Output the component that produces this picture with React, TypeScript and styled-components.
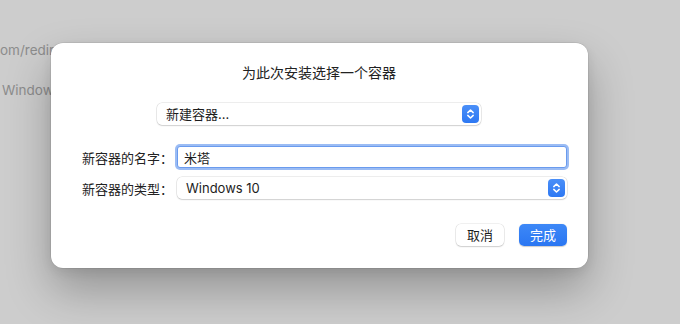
import { FC } from "react";
import styled, { createGlobalStyle } from "styled-components";

const FONT = `"Inter", "Noto Sans CJK SC", "Noto Sans", sans-serif`;

const GlobalStyle = createGlobalStyle`
	html, body {
		margin: 0;
		padding: 0;
		background: #cdcdcd;
		font-family: ${FONT};
		-webkit-font-smoothing: antialiased;
	}
`;

const Chevrons: FC = () => (
	<svg width='9' height='12' viewBox='0 0 9 12' fill='none'>
		<path d='M1.8 4.6 L4.5 2 L7.2 4.6' stroke='white' strokeWidth='1.5' strokeLinecap='round' strokeLinejoin='round' />
		<path d='M1.8 7.4 L4.5 10 L7.2 7.4' stroke='white' strokeWidth='1.5' strokeLinecap='round' strokeLinejoin='round' />
	</svg>
);

const PopUp: FC<{ label: string; width?: number }> = ({ label, width }) => (
	<Select $width={width}>
		<span>{label}</span>
		<Stepper>
			<Chevrons />
		</Stepper>
	</Select>
);

export default function App() {
	return (
		<>
			<GlobalStyle />
			<Page>
				<Behind>
					<BehindLine $top={42} $left={0}>om/redirect</BehindLine>
					<BehindLine $top={24} $left={2}>Windows</BehindLine>
				</Behind>

				<Dialog>
					<Title>为此次安装选择一个容器</Title>
					<Centered>
						<PopUp label='新建容器...' width={324} />
					</Centered>

					<Form>
						<Label>新容器的名字：</Label>
						<NameInput defaultValue='米塔' />
						<Label>新容器的类型：</Label>
						<PopUp label='Windows 10' />
					</Form>

					<Actions>
						<Button>取消</Button>
						<Button $primary>完成</Button>
					</Actions>
				</Dialog>
			</Page>
		</>
	);
}

const Page = styled.div`
	position: relative;
	width: 680px;
	height: 324px;
	overflow: hidden;
	background: #cdcdcd;
`;

const Behind = styled.div`
	display: flex;
	flex-direction: column;
	color: #8c8c8c;
	font-size: 13.5px;
	line-height: 16px;
`;

const BehindLine = styled.div<{ $top: number; $left: number }>`
	margin-top: ${(p) => p.$top}px;
	padding-left: ${(p) => p.$left}px;
	white-space: nowrap;
`;

const Dialog = styled.div`
	position: absolute;
	left: 51px;
	top: 43px;
	width: 537px;
	height: 225px;
	box-sizing: border-box;
	padding: 22px 21px 0 29px;
	background: #fff;
	border-radius: 12px;
	box-shadow: 0 0 0 0.5px rgba(0, 0, 0, 0.12), 0 22px 45px rgba(0, 0, 0, 0.28), 0 4px 12px rgba(0, 0, 0, 0.08);
	font-size: 13px;
	color: #222;
`;

const Title = styled.div`
	text-align: center;
	font-size: 14px;
	line-height: 16px;
	padding-right: 9px;
`;

const Centered = styled.div`
	display: flex;
	justify-content: center;
	margin-top: 22px;
	padding-right: 9px;
`;

const Select = styled.div<{ $width?: number }>`
	display: flex;
	align-items: center;
	justify-content: space-between;
	box-sizing: border-box;
	width: ${(p) => (p.$width ? `${p.$width}px` : "100%")};
	height: 22px;
	padding: 0 2px 0 9px;
	background: #fff;
	border-radius: 5px;
	box-shadow: 0 0 0 0.5px rgba(0, 0, 0, 0.14), 0 1px 1.5px rgba(0, 0, 0, 0.12);
	line-height: 16px;
	color: #1d1d1d;
`;

const Stepper = styled.span`
	display: flex;
	align-items: center;
	justify-content: center;
	width: 17px;
	height: 18px;
	border-radius: 4px;
	background: linear-gradient(#4a8ff8, #2d78f3);
`;

const Form = styled.div`
	display: grid;
	grid-template-columns: 93px 1fr;
	column-gap: 4px;
	row-gap: 9px;
	align-items: center;
	margin-top: 21px;
`;

const Label = styled.div`
	text-align: right;
	white-space: nowrap;
	color: #222;
`;

const NameInput = styled.input`
	box-sizing: border-box;
	height: 22px;
	width: 100%;
	margin: 0;
	padding: 0 6px;
	border: 1px solid #6a9bee;
	border-radius: 3px;
	outline: none;
	box-shadow: 0 0 0 2px rgba(122, 165, 240, 0.75);
	font: 13px ${FONT};
	color: #1d1d1d;
`;

const Actions = styled.div`
	display: flex;
	justify-content: flex-end;
	gap: 15px;
	margin-top: 25px;
`;

const Button = styled.div<{ $primary?: boolean }>`
	display: flex;
	align-items: center;
	justify-content: center;
	width: 48px;
	height: 22px;
	border-radius: 5px;
	line-height: 16px;
	color: ${(p) => (p.$primary ? "#fff" : "#1d1d1d")};
	background: ${(p) => (p.$primary ? "linear-gradient(#3d88f7, #2a76f2)" : "#fff")};
	box-shadow: ${(p) =>
		p.$primary
			? "0 0.5px 1px rgba(0, 0, 0, 0.2)"
			: "0 0 0 0.5px rgba(0, 0, 0, 0.12), 0 1px 1.5px rgba(0, 0, 0, 0.14)"};
`;
